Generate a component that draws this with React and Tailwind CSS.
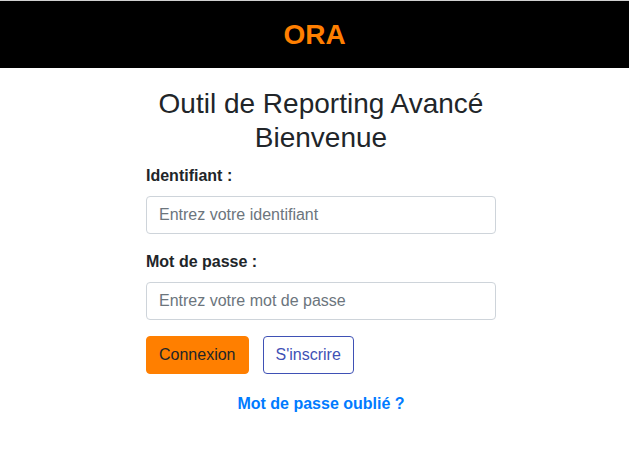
export default function App() {
    return (
        <div className="min-h-[474px] bg-white font-['Liberation_Sans',Arial,sans-serif] text-[#212529] border-t border-[#d0d0d0]">
            <header className="h-[67px] bg-black flex items-center justify-center">
                <h1 className="text-[28px] font-bold text-[#ff7f00] leading-[1.2]">ORA</h1>
            </header>
            <main className="flex justify-center pt-[19px]">
                <div className="w-[350px] ml-[13px]">
                    <h3 className="text-[28px] leading-[1.2] text-center mb-[10px]">
                        Outil de Reporting Avancé
                        <br />
                        Bienvenue
                    </h3>
                    <form onSubmit={e => e.preventDefault()}>
                        <div className="mb-4">
                            <label className="block font-bold text-base leading-6 mb-2">Identifiant :</label>
                            <input
                                type="text"
                                placeholder="Entrez votre identifiant"
                                className="block w-full h-[38px] px-3 text-base border border-[#ced4da] rounded-[4px] placeholder:text-[#6c757d] outline-none"
                            />
                        </div>
                        <div className="mb-4">
                            <label className="block font-bold text-base leading-6 mb-2">Mot de passe :</label>
                            <input
                                type="password"
                                placeholder="Entrez votre mot de passe"
                                className="block w-full h-[38px] px-3 text-base border border-[#ced4da] rounded-[4px] placeholder:text-[#6c757d] outline-none"
                            />
                        </div>
                        <div className="flex gap-[14px]">
                            <button type="submit" className="h-[38px] px-3 text-base bg-[#ff7f00] text-[#212529] rounded-[4px] border border-[#ff7f00]">
                                Connexion
                            </button>
                            <button type="button" className="h-[38px] px-3 text-base bg-white text-[#3f51b5] rounded-[4px] border border-[#3f51b5]">
                                S'inscrire
                            </button>
                        </div>
                        <div className="mt-[18px] text-center">
                            <a href="#" className="font-bold text-base text-[#007bff]">Mot de passe oublié ?</a>
                        </div>
                    </form>
                </div>
            </main>
        </div>
    );
}
